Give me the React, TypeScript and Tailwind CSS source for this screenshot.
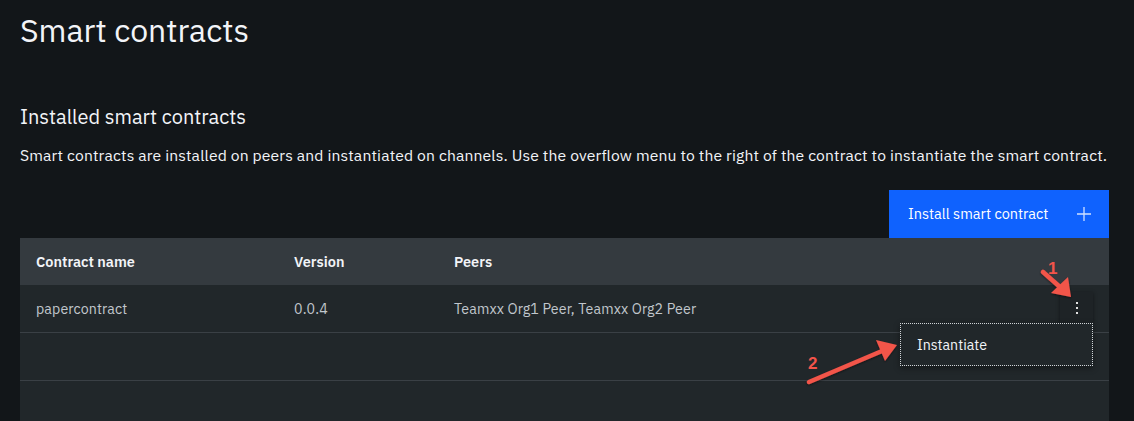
import React from "react";

const font = "font-['IBM_Plex_Sans','Open_Sans','Noto_Sans',sans-serif]";

export default function App() {
  return (
    <div className={`relative w-[1134px] h-[421px] overflow-hidden bg-[#121619] ${font}`}>
      <div className="pl-5 pr-[25px]">
        <h1 className="pt-[10px] text-[32px] leading-[40px] text-[#f2f4f8] font-normal">Smart contracts</h1>
        <h2 className="mt-[53px] text-[20px] leading-[28px] text-[#f2f4f8] font-normal">Installed smart contracts</h2>
        <p className="mt-[13px] text-[15.7px] leading-[22px] tracking-[0.14px] text-[#f2f4f8]">
          Smart contracts are installed on peers and instantiated on channels. Use the overflow menu to the right of the contract to instantiate the smart contract.
        </p>
        <div className="mt-[24px] flex justify-end">
          <button className="w-[220px] h-[48px] bg-[#0f62fe] flex items-center justify-between pl-[19px] pr-[17px] text-[14.5px] text-white">
            <span>Install smart contract</span>
            <svg width="16" height="16" viewBox="0 0 16 16" className="text-white/80">
              <path d="M8 1v14M1 8h14" stroke="currentColor" strokeWidth="1.3" fill="none" />
            </svg>
          </button>
        </div>
        <div className="w-[1089px]">
          <div className="h-[47px] bg-[#343a3f] flex items-center text-[14.5px] font-semibold text-[#f2f4f8]">
            <div className="w-[258px] pl-4">Contract name</div>
            <div className="w-[160px] pl-4">Version</div>
            <div className="pl-4">Peers</div>
          </div>
          <div className="relative h-[48px] bg-[#21272a] border-b border-[#3a4045] flex items-center text-[14.2px] tracking-[0.12px] text-[#c1c7cd]">
            <div className="w-[258px] pl-4">papercontract</div>
            <div className="w-[160px] pl-4">0.0.4</div>
            <div className="pl-4">Teamxx Org1 Peer, Teamxx Org2 Peer</div>
            <div className="absolute right-[16px] top-[7px] w-[33px] h-[32px] bg-[#1e2326] shadow-[0_1px_4px_rgba(0,0,0,0.45)] flex items-center justify-center">
              <svg width="4" height="12" viewBox="0 0 4 12">
                <rect x="1" y="0" width="2" height="2" fill="#e0e0e0" />
                <rect x="1" y="5" width="2" height="2" fill="#e0e0e0" />
                <rect x="1" y="10" width="2" height="2" fill="#e0e0e0" />
              </svg>
            </div>
          </div>
          <div className="h-[48px] bg-[#21272a] border-b border-[#3a4045]" />
          <div className="h-[48px] bg-[#21272a]" />
        </div>
      </div>

      <div className="absolute left-[900px] top-[323px] w-[193px] h-[43px] bg-[#21272a] border border-dotted border-[#d0d4d8] shadow-[0_2px_6px_rgba(0,0,0,0.4)] flex items-center pl-[16px] text-[14.2px] text-[#f2f4f8]">
        Instantiate
      </div>

      <svg className="absolute inset-0 pointer-events-none" width="1134" height="421" viewBox="0 0 1134 421">
        <defs>
          <filter id="sh" x="-20%" y="-20%" width="140%" height="140%">
            <feDropShadow dx="0" dy="1" stdDeviation="1" floodColor="#000" floodOpacity="0.5" />
          </filter>
        </defs>
        <g filter="url(#sh)" fill="#f2544a" stroke="#f2544a" strokeLinecap="round">
          <line x1="1043" y1="272" x2="1060" y2="287" strokeWidth="4.5" />
          <polygon points="1071,297 1051,293 1068,277" stroke="none" />
          <line x1="809" y1="382" x2="882" y2="351" strokeWidth="4.5" />
          <polygon points="897,345 885,361 876,340" stroke="none" />
        </g>
        <text x="1048" y="274" fill="#f2544a" fontSize="17" fontWeight="700" fontFamily="'Liberation Sans',sans-serif">1</text>
        <text x="808" y="369" fill="#f2544a" fontSize="17" fontWeight="700" fontFamily="'Liberation Sans',sans-serif">2</text>
      </svg>
    </div>
  );
}
